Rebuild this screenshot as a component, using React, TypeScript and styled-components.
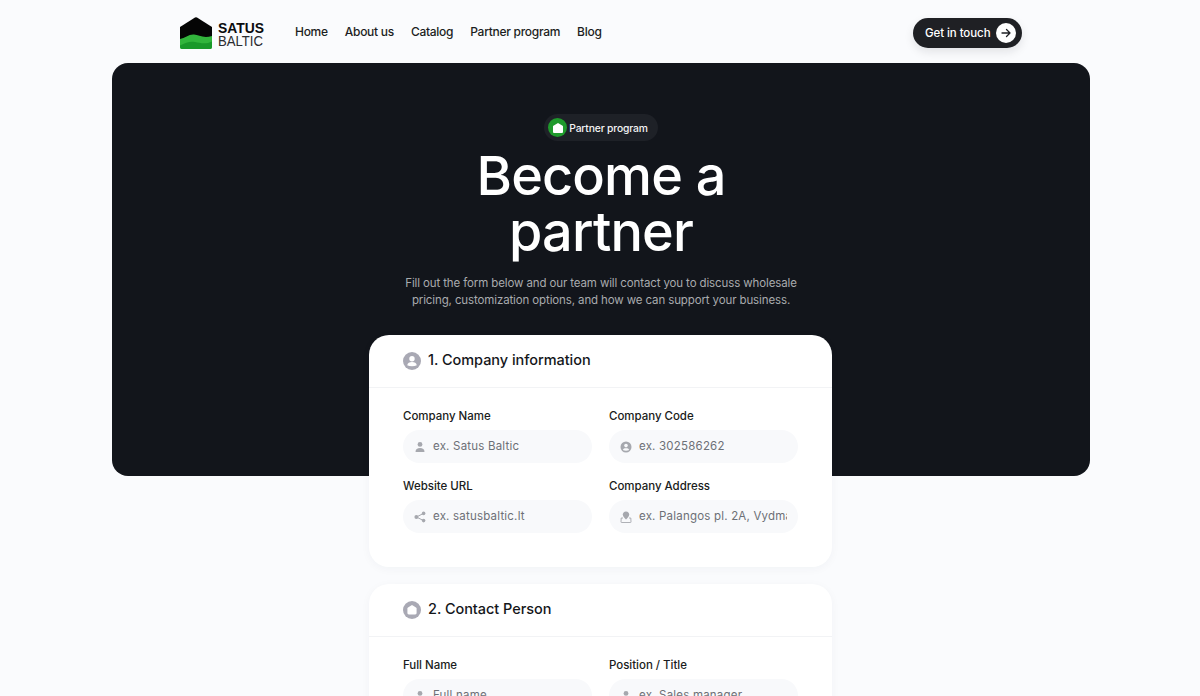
import React from "react";
import styled, { createGlobalStyle } from "styled-components";

const FONT = `Inter, "Noto Sans", Arial, sans-serif`;

const GlobalStyle = createGlobalStyle`
  html, body {
    margin: 0;
    padding: 0;
    height: 696px;
    overflow: hidden;
    background: #fafbfd;
  }
  * {
    box-sizing: border-box;
  }
`;

const Page = styled.div`
  display: flex;
  flex-direction: column;
  align-items: center;
  padding-left: 2px;
  font-family: ${FONT};
  color: #14161a;
`;

const Header = styled.header`
  width: 842px;
  height: 63px;
  display: flex;
  align-items: center;
`;

const LogoLink = styled.a`
  display: flex;
  width: 115px;
  padding-top: 3px;
`;

const LogoMark = styled.svg`
  overflow: visible;
`;

const Nav = styled.nav`
  display: flex;
  gap: 17px;
  flex: 1;
`;

const NavLink = styled.a`
  font-size: 12px;
  font-weight: 500;
  letter-spacing: -0.28px;
  color: #1c1e22;
`;

const TouchButton = styled.button`
  display: flex;
  align-items: center;
  justify-content: space-between;
  width: 109px;
  height: 30px;
  margin-top: 3px;
  padding: 0 6px 0 12px;
  border: none;
  border-radius: 15px;
  background: #1f2024;
  box-shadow: 0 4px 10px rgba(20, 22, 30, 0.1);
  color: #fff;
  font-family: ${FONT};
  font-size: 11.5px;
  font-weight: 500;
  letter-spacing: -0.08px;
`;

const ArrowCircle = styled.span`
  display: flex;
  align-items: center;
  justify-content: center;
  width: 20px;
  height: 20px;
  border-radius: 50%;
  background: #fff;
  color: #1f2024;
`;

const Hero = styled.section`
  width: 978px;
  height: 413px;
  padding-top: 51px;
  display: flex;
  flex-direction: column;
  align-items: center;
  border-radius: 16px;
  background: #12151b;
`;

const Badge = styled.div`
  display: flex;
  align-items: center;
  gap: 2px;
  height: 27px;
  padding: 0 10px 0 4px;
  border-radius: 14px;
  background: #1e2127;
  color: #f4f4f5;
  font-size: 10.3px;
  font-weight: 500;
  letter-spacing: -0.15px;
`;

const BadgeIcon = styled.span`
  display: flex;
  align-items: center;
  justify-content: center;
  width: 19px;
  height: 19px;
  border-radius: 50%;
  background: #1f9a2c;
`;

const Title = styled.h1`
  margin: 7px 0 0;
  width: 400px;
  font-size: 54px;
  line-height: 56px;
  font-weight: 500;
  letter-spacing: -0.85px;
  text-align: center;
  color: #fff;
`;

const Lead = styled.p`
  margin: 15px 0 0;
  width: 420px;
  font-size: 11.5px;
  line-height: 17px;
  letter-spacing: -0.12px;
  text-align: center;
  color: #a9abae;
`;

const FormStack = styled.form`
  width: 463px;
  margin: -141px 1px 0 0;
  display: flex;
  flex-direction: column;
  gap: 17px;
`;

const Card = styled.section`
  border-radius: 20px;
  background: #fff;
  box-shadow: 0 2px 10px rgba(30, 40, 70, 0.04);
`;

const CardHead = styled.div`
  display: flex;
  align-items: center;
  gap: 7px;
  height: 53px;
  padding: 0 0 1px 34px;
  border-bottom: 1px solid #f2f3f5;
`;

const CardTitle = styled.h2`
  margin: 0 0 3px;
  font-size: 14.5px;
  font-weight: 500;
  letter-spacing: -0.05px;
  color: #14161a;
`;

const CardBody = styled.div`
  display: grid;
  grid-template-columns: 189px 189px;
  column-gap: 17px;
  row-gap: 16px;
  padding: 21px 34px 34px;
`;

const Field = styled.label`
  display: flex;
  flex-direction: column;
  gap: 6px;
`;

const FieldLabel = styled.span`
  height: 15px;
  font-size: 11.5px;
  line-height: 15px;
  font-weight: 500;
  letter-spacing: -0.03px;
  color: #1a1c20;
`;

const InputWrap = styled.span`
  display: flex;
  align-items: center;
  gap: 7px;
  height: 33px;
  padding: 0 11px;
  border-radius: 17px;
  background: #f8f9fb;
`;

const TextInput = styled.input`
  flex: 1;
  min-width: 0;
  margin-bottom: 2px;
  padding: 0;
  border: none;
  outline: none;
  background: none;
  font-family: ${FONT};
  font-size: 11.5px;
  letter-spacing: 0.2px;

  &::placeholder {
    color: #6d7076;
    opacity: 1;
  }
`;

const Logo = () => (
  <LogoMark width="85" height="32" viewBox="0 0 85 32">
    <path d="M15 0.6 Q16 0 17 0.6 L32 10 L32 24 L0 24 L0 10 Z" fill="#050505" />
    <path
      d="M0 22 C5 21 9 17 14 17.5 C19 18 23 21.5 32 19 L32 30 Q32 32 30 32 L2 32 Q0 32 0 30 Z"
      fill="#32b53c"
    />
    <path
      d="M0 28.5 C6 25.5 10 24 15 25 C20 26 26 27.5 32 24.5 L32 30 Q32 32 30 32 L2 32 Q0 32 0 30 Z"
      fill="#1a992a"
    />
    <text x="38" y="16" textLength="46" lengthAdjust="spacingAndGlyphs" fontFamily="Liberation Sans, Arial, sans-serif" fontSize="15.5" fontWeight="700" fill="#0b0c0e">
      SATUS
    </text>
    <text x="38" y="29" textLength="45" lengthAdjust="spacingAndGlyphs" fontFamily="Liberation Sans, Arial, sans-serif" fontSize="15.5" fill="#2a2c30">
      BALTIC
    </text>
  </LogoMark>
);

const ArrowIcon = () => (
  <svg width="12" height="12" viewBox="0 0 12 12" fill="none" stroke="currentColor" strokeWidth="1.3" strokeLinecap="round" strokeLinejoin="round">
    <path d="M2 6 H10 M6.5 2.5 L10 6 L6.5 9.5" />
  </svg>
);

const HouseGlyph = ({ size, color }: { size: number; color: string }) => (
  <svg width={size} height={size} viewBox="0 0 12 12">
    <path d="M6 1 L10.6 3.8 Q11 4 11 4.6 L11 10 Q11 11 10 11 L2 11 Q1 11 1 10 L1 4.6 Q1 4 1.4 3.8 Z" fill={color} />
  </svg>
);

const CompanyBadge = () => (
  <svg width="18" height="18" viewBox="0 0 18 18">
    <circle cx="9" cy="9" r="9" fill="#a9a9b4" />
    <circle cx="9" cy="6.8" r="2.7" fill="#fff" />
    <path d="M4.2 13.2 C4.6 10.8 6.4 10 9 10 C11.6 10 13.4 10.8 13.8 13.2 Q11.8 14.3 9 14.3 Q6.2 14.3 4.2 13.2 Z" fill="#fff" />
  </svg>
);

const ContactBadge = () => (
  <svg width="18" height="18" viewBox="0 0 18 18">
    <circle cx="9" cy="9" r="9" fill="#a9a9b4" />
    <path d="M9 4 L13 6.6 Q13.6 7 13.6 7.6 L13.6 12 Q13.6 13.4 12.2 13.4 L5.8 13.4 Q4.4 13.4 4.4 12 L4.4 7.6 Q4.4 7 5 6.6 Z" fill="#fff" />
  </svg>
);

const PersonIcon = () => (
  <svg width="12" height="12" viewBox="0 0 12 12" fill="#a6a8ae">
    <circle cx="6" cy="3.4" r="2.4" />
    <path d="M1.5 11 C1.5 8 3.4 7 6 7 C8.6 7 10.5 8 10.5 11 Z" />
  </svg>
);

const CircleUserIcon = () => (
  <svg width="12" height="12" viewBox="0 0 12 12">
    <circle cx="6" cy="6" r="5.5" fill="#a6a8ae" />
    <circle cx="6" cy="4.6" r="1.8" fill="#f8f9fb" />
    <path d="M2.8 9 C3.2 7.6 4.4 7.2 6 7.2 C7.6 7.2 8.8 7.6 9.2 9 Q7.8 9.8 6 9.8 Q4.2 9.8 2.8 9 Z" fill="#f8f9fb" />
  </svg>
);

const ShareIcon = () => (
  <svg width="12" height="12" viewBox="0 0 12 12" fill="#a6a8ae" stroke="#a6a8ae">
    <path d="M9.5 2.4 L2.5 6 L9.5 9.6" fill="none" strokeWidth="1" />
    <circle cx="9.6" cy="2.4" r="1.8" stroke="none" />
    <circle cx="2.4" cy="6" r="2" stroke="none" />
    <circle cx="9.6" cy="9.6" r="1.8" stroke="none" />
  </svg>
);

const PinIcon = () => (
  <svg width="12" height="12" viewBox="0 0 12 12">
    <path d="M6 0.5 C8 0.5 9.2 2 9.2 3.6 C9.2 5.6 7.2 7.4 6 8.4 C4.8 7.4 2.8 5.6 2.8 3.6 C2.8 2 4 0.5 6 0.5 Z" fill="#a6a8ae" />
    <path d="M3 7 L1.2 7 L1 11 Q1 11.5 1.5 11.5 L10.5 11.5 Q11 11.5 11 11 L10.8 7 L9 7" fill="none" stroke="#a6a8ae" strokeWidth="0.9" />
  </svg>
);

const NAV_ITEMS = ["Home", "About us", "Catalog", "Partner program", "Blog"];

const COMPANY_FIELDS = [
  { label: "Company Name", placeholder: "ex. Satus Baltic", icon: <PersonIcon /> },
  { label: "Company Code", placeholder: "ex. 302586262", icon: <CircleUserIcon /> },
  { label: "Website URL", placeholder: "ex. satusbaltic.lt", icon: <ShareIcon /> },
  { label: "Company Address", placeholder: "ex. Palangos pl. 2A, Vydmantai", icon: <PinIcon /> },
];

const CONTACT_FIELDS = [
  { label: "Full Name", placeholder: "Full name", icon: <PersonIcon /> },
  { label: "Position / Title", placeholder: "ex. Sales manager", icon: <PersonIcon /> },
];

type FieldData = { label: string; placeholder: string; icon: React.ReactNode };

const FormCard = ({ title, badge, fields }: { title: string; badge: React.ReactNode; fields: FieldData[] }) => (
  <Card>
    <CardHead>
      {badge}
      <CardTitle>{title}</CardTitle>
    </CardHead>
    <CardBody>
      {fields.map((field) => (
        <Field key={field.label}>
          <FieldLabel>{field.label}</FieldLabel>
          <InputWrap>
            {field.icon}
            <TextInput placeholder={field.placeholder} />
          </InputWrap>
        </Field>
      ))}
    </CardBody>
  </Card>
);

const App = () => (
  <Page>
    <GlobalStyle />
    <Header>
      <LogoLink>
        <Logo />
      </LogoLink>
      <Nav>
        {NAV_ITEMS.map((item) => (
          <NavLink key={item}>{item}</NavLink>
        ))}
      </Nav>
      <TouchButton type="button">
        Get in touch
        <ArrowCircle>
          <ArrowIcon />
        </ArrowCircle>
      </TouchButton>
    </Header>
    <Hero>
      <Badge>
        <BadgeIcon>
          <HouseGlyph size={12} color="#fff" />
        </BadgeIcon>
        Partner program
      </Badge>
      <Title>Become a partner</Title>
      <Lead>
        Fill out the form below and our team will contact you to discuss wholesale pricing, customization options, and
        how we can support your business.
      </Lead>
    </Hero>
    <FormStack>
      <FormCard title="1. Company information" badge={<CompanyBadge />} fields={COMPANY_FIELDS} />
      <FormCard title="2. Contact Person" badge={<ContactBadge />} fields={CONTACT_FIELDS} />
    </FormStack>
  </Page>
);

export default App;
